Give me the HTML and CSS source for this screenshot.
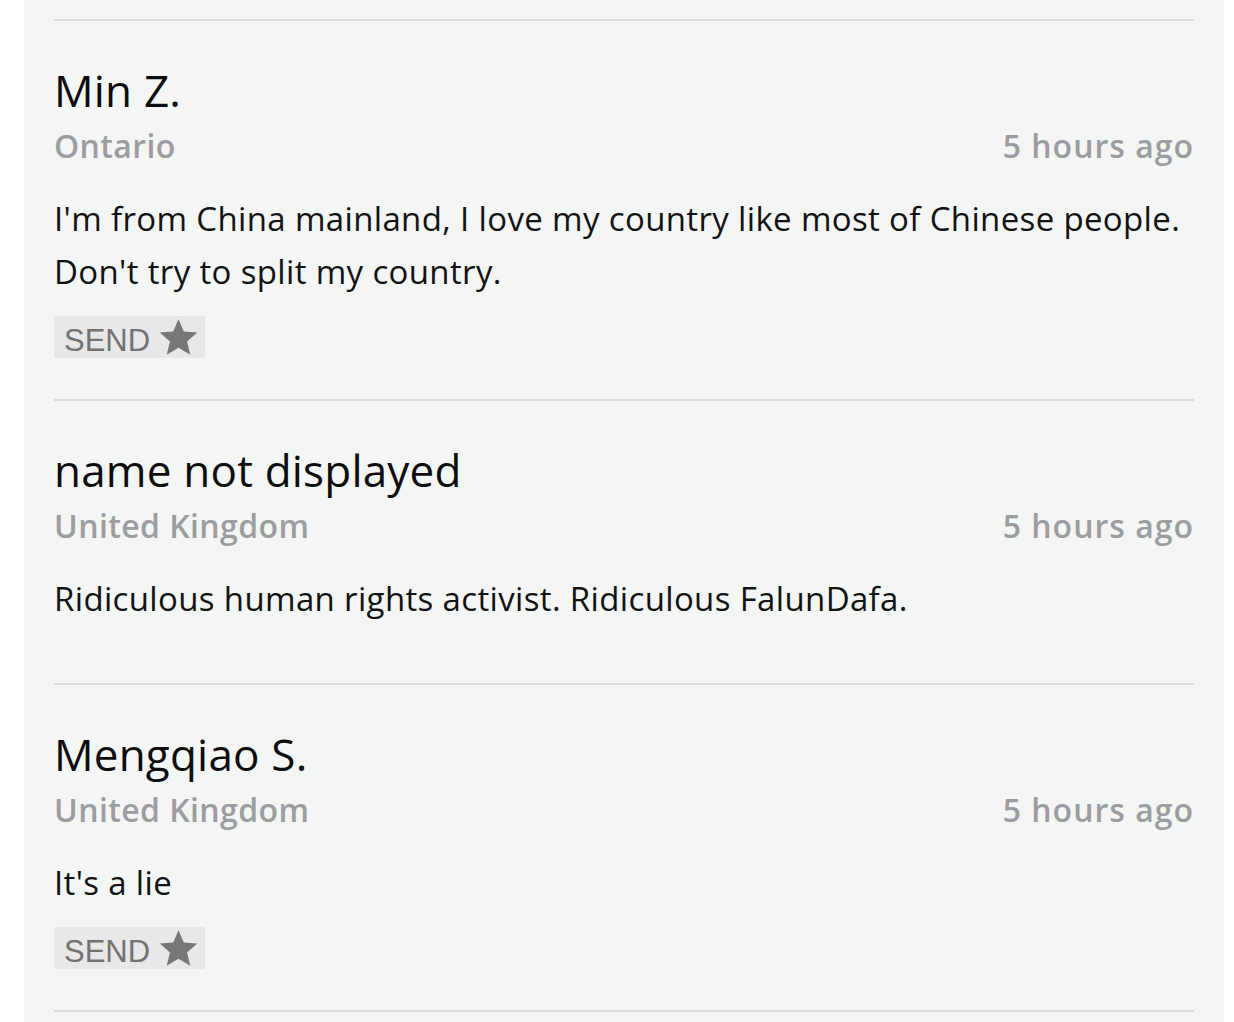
FILE: index.html
```html
<!DOCTYPE html>
<html>
<head>
<meta charset="utf-8">
<link rel="stylesheet" href="styles.css">
</head>
<body>
<div class="panel">
  <div class="comment">
    <div class="name">Min Z.</div>
    <div class="meta"><span class="loc">Ontario</span><span class="time">5 hours ago</span></div>
    <p class="text">I'm from China mainland, I love my country like most of Chinese people. Don't try to split my country.</p>
    <button class="send"><span class="send-label">SEND</span><svg class="star" viewBox="0 0 24 24"><path d="M12 1.3l3.1 7.2 7.9.6-6 5.2 1.9 7.8L12 18l-6.9 4.1 1.9-7.8-6-5.2 7.9-.6z"/></svg></button>
  </div>
  <div class="comment">
    <div class="name">name not displayed</div>
    <div class="meta"><span class="loc">United Kingdom</span><span class="time">5 hours ago</span></div>
    <p class="text">Ridiculous human rights activist. Ridiculous FalunDafa.</p>
  </div>
  <div class="comment">
    <div class="name">Mengqiao S.</div>
    <div class="meta"><span class="loc">United Kingdom</span><span class="time">5 hours ago</span></div>
    <p class="text">It's a lie</p>
    <button class="send"><span class="send-label">SEND</span><svg class="star" viewBox="0 0 24 24"><path d="M12 1.3l3.1 7.2 7.9.6-6 5.2 1.9 7.8L12 18l-6.9 4.1 1.9-7.8-6-5.2 7.9-.6z"/></svg></button>
  </div>
  <div class="comment end"></div>
</div>
</body>
</html>
```
FILE: styles.css
```css
html, body {
  margin: 0;
  padding: 0;
  background: #ffffff;
}
body {
  font-family: "Open Sans", "Noto Sans", sans-serif;
  height: 1022px;
  overflow: hidden;
}
.panel {
  margin-left: 24px;
  width: 1200px;
  box-sizing: border-box;
  padding: 19px 30px 0;
  background: #f4f5f5;
  min-height: 1022px;
}
.comment {
  border-top: 2px solid #dcdcdc;
  padding-top: 43px;
  padding-bottom: 41px;
}
.comment.end {
  padding: 0;
}
.name {
  font-size: 44px;
  line-height: 52px;
  letter-spacing: 0.2px;
  color: #0d0d0d;
}
.meta {
  display: flex;
  justify-content: space-between;
  margin-top: 5px;
  font-size: 32px;
  font-weight: 600;
  letter-spacing: 0.4px;
  line-height: 50px;
  color: #9c9d9f;
}
.time {
  letter-spacing: 1px;
}
.text {
  margin: 21px 0 0;
  font-size: 33px;
  line-height: 53px;
  letter-spacing: 0.35px;
  color: #121212;
}
.text:last-child {
  margin-bottom: 17px;
}
.send {
  display: flex;
  align-items: center;
  gap: 8px;
  margin-top: 18px;
  height: 42px;
  padding: 0 6px 0 10px;
  border: 0;
  background: #e8e8e8;
  font-family: "Liberation Sans", Arial, sans-serif;
  font-size: 31px;
  color: #737373;
}
.send-label {
  padding-top: 7px;
}
.star {
  width: 41px;
  height: 41px;
  fill: #777777;
}
```
